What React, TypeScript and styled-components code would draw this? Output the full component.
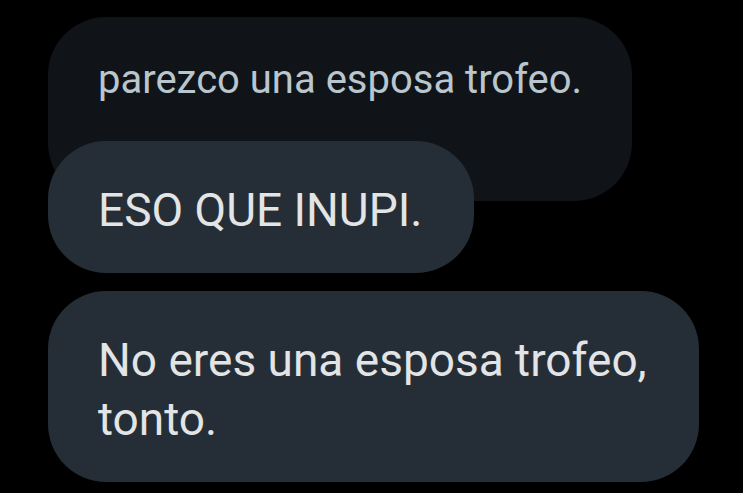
import styled, { createGlobalStyle } from "styled-components";

const GlobalStyle = createGlobalStyle`
  html, body {
    margin: 0;
    padding: 0;
    background: #000;
  }
  body {
    font-family: Roboto, "Noto Sans", sans-serif;
  }
`;

const Thread = styled.div`
  display: flex;
  flex-direction: column;
  align-items: flex-start;
  width: 743px;
  height: 493px;
  box-sizing: border-box;
  padding: 17px 0 0 48px;
  overflow: hidden;
`;

const Bubble = styled.div<{ $quoted?: boolean }>`
  box-sizing: border-box;
  border-radius: 58px;
  padding: ${(p) => (p.$quoted ? "33px 50px 92px" : "40px 52px 33px 50px")};
  background: ${(p) => (p.$quoted ? "#101418" : "#252e36")};
  color: ${(p) => (p.$quoted ? "#b9c6ce" : "#e2e4e5")};
  font-size: ${(p) => (p.$quoted ? "40px" : "46px")};
  line-height: 59px;
  position: relative;
`;

const ReplyBubble = styled(Bubble)`
  margin-top: -60px;
`;

const LastBubble = styled(Bubble)`
  margin-top: 18px;
`;

export default function App() {
  return (
    <>
      <GlobalStyle />
      <Thread>
        <Bubble $quoted>parezco una esposa trofeo.</Bubble>
        <ReplyBubble>ESO QUE INUPI.</ReplyBubble>
        <LastBubble>
          No eres una esposa trofeo,
          <br />
          tonto.
        </LastBubble>
      </Thread>
    </>
  );
}
